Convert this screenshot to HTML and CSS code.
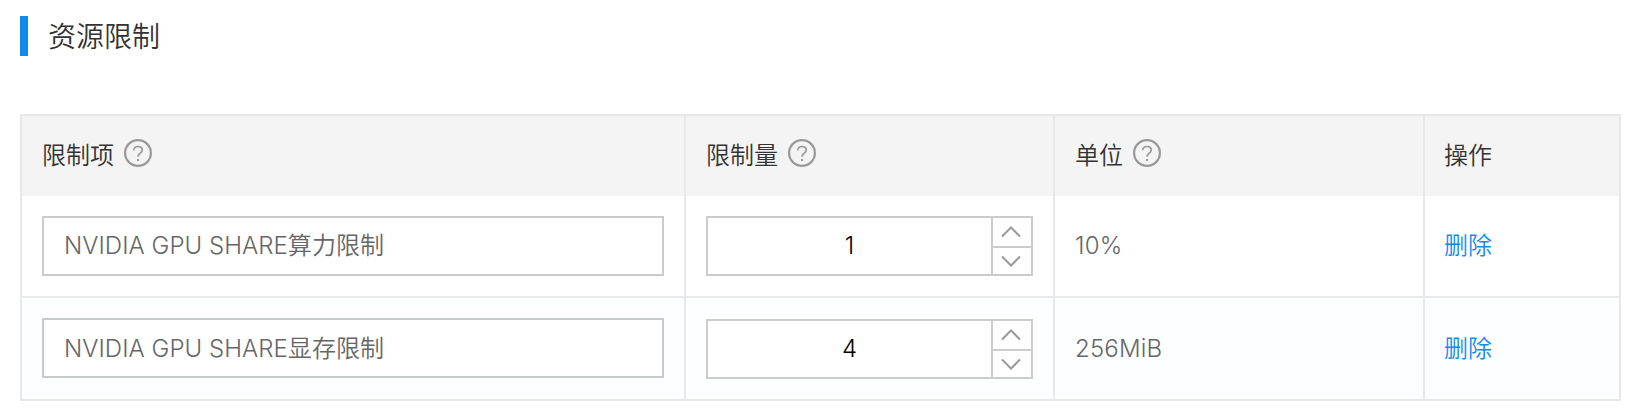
FILE: index.html
```html
<!DOCTYPE html>
<html lang="zh-CN">
<head>
  <meta charset="UTF-8" />
  <meta name="viewport" content="width=device-width, initial-scale=1.0"/>
  <title>资源限制</title>
  <link rel="stylesheet" href="styles.css">
</head>
<body>
  <svg class="icon-defs" aria-hidden="true">
    <symbol id="icon-help" viewBox="0 0 28 28">
      <circle cx="14" cy="14" r="12.9" fill="none" stroke="currentColor" stroke-width="2.2"/>
      <path d="M9.8 11.2C9.9 8.8 11.6 7.5 14 7.5c2.5 0 4.3 1.4 4.3 3.6 0 3.1-4.2 3.1-4.2 6.7" fill="none" stroke="currentColor" stroke-width="1.7"/>
      <rect x="13" y="20" width="2" height="2" fill="currentColor"/>
    </symbol>
    <symbol id="icon-up" viewBox="0 0 20 12">
      <path d="M1 10.5L10 1.5l9 9" fill="none" stroke="currentColor" stroke-width="2"/>
    </symbol>
    <symbol id="icon-down" viewBox="0 0 20 12">
      <path d="M1 1.5l9 9 9-9" fill="none" stroke="currentColor" stroke-width="2"/>
    </symbol>
  </svg>

  <div class="container">
    <h1 class="title">资源限制</h1>

    <div class="table">
      <div class="row head">
        <div class="cell">限制项<svg class="help"><use href="#icon-help"/></svg></div>
        <div class="cell">限制量<svg class="help"><use href="#icon-help"/></svg></div>
        <div class="cell">单位<svg class="help"><use href="#icon-help"/></svg></div>
        <div class="cell">操作</div>
      </div>

      <div class="row">
        <div class="cell"><div class="select">NVIDIA GPU SHARE算力限制</div></div>
        <div class="cell">
          <div class="number">
            <input class="number-input" type="text" value="1">
            <div class="number-btns">
              <button class="step"><svg class="arrow"><use href="#icon-up"/></svg></button>
              <button class="step"><svg class="arrow"><use href="#icon-down"/></svg></button>
            </div>
          </div>
        </div>
        <div class="cell unit">10%</div>
        <div class="cell"><a class="delete">删除</a></div>
      </div>

      <div class="row active">
        <div class="cell"><div class="select">NVIDIA GPU SHARE显存限制</div></div>
        <div class="cell">
          <div class="number">
            <input class="number-input" type="text" value="4">
            <div class="number-btns">
              <button class="step"><svg class="arrow"><use href="#icon-up"/></svg></button>
              <button class="step"><svg class="arrow"><use href="#icon-down"/></svg></button>
            </div>
          </div>
        </div>
        <div class="cell unit">256MiB</div>
        <div class="cell"><a class="delete">删除</a></div>
      </div>
    </div>
  </div>
</body>
</html>
```
FILE: styles.css
```css
* {
  box-sizing: border-box;
}

body {
  margin: 0;
  background-color: #fff;
  font-family: Inter, "Noto Sans CJK SC", sans-serif;
  font-size: 24px;
  color: #333;
}

.icon-defs {
  display: none;
}

.container {
  padding: 16px 9px 0 20px;
}

.title {
  margin: 0 0 58px;
  padding-left: 20px;
  height: 40px;
  border-left: 8px solid #108cee;
  font-size: 28px;
  font-weight: 350;
  line-height: 43px;
}

.table {
  border: 2px solid #e8e8e8;
}

.row {
  display: grid;
  grid-template-columns: 664px 369px 370px 1fr;
  height: 102px;
  border-bottom: 2px solid #e9e9e9;
}

.row.head {
  height: 80px;
  border-bottom: none;
  background-color: #f4f4f4;
}

.row.active {
  height: 101px;
  border-bottom: none;
  background-color: #fcfeff;
}

.cell {
  display: flex;
  align-items: center;
  padding: 0 20px;
  border-right: 2px solid #e8e8e8;
  font-weight: 350;
  line-height: 30px;
}

.head .cell {
  line-height: 32px;
}

.cell:last-child {
  padding-left: 19px;
  border-right: none;
}

.help {
  width: 28px;
  height: 28px;
  margin: 0 0 6px 10px;
  color: #999;
}

.select {
  width: 100%;
  height: 60px;
  padding-left: 20px;
  border: 2px solid #ccc;
  background-color: #fff;
  line-height: 56px;
  letter-spacing: 0.05px;
  color: #666;
}

.active .select {
  margin-bottom: 1px;
  border-color: #c4cacd;
  line-height: 58px;
}

.number {
  display: flex;
  width: 100%;
  height: 60px;
  border: 2px solid #ccc;
  background-color: #fff;
}

.active .number {
  margin-top: 1px;
}

.number-input {
  flex: 1;
  min-width: 0;
  padding: 0 0 1px;
  border: none;
  outline: none;
  background-color: transparent;
  font-family: inherit;
  font-size: 24px;
  font-weight: 350;
  text-align: center;
  color: #000;
}

.number-btns {
  display: flex;
  flex-direction: column;
  width: 40px;
  border-left: 2px solid #ccc;
}

.step {
  display: flex;
  flex: 1;
  align-items: center;
  justify-content: center;
  padding: 0 2px 0 0;
  border: none;
  background-color: transparent;
  color: #999;
}

.step:first-child {
  flex: 0 0 30px;
  border-bottom: 2px solid #ccc;
}

.arrow {
  width: 20px;
  height: 12px;
}

.unit {
  letter-spacing: 0.2px;
  color: #666;
}

.delete {
  color: #108cee;
  cursor: pointer;
}
```
